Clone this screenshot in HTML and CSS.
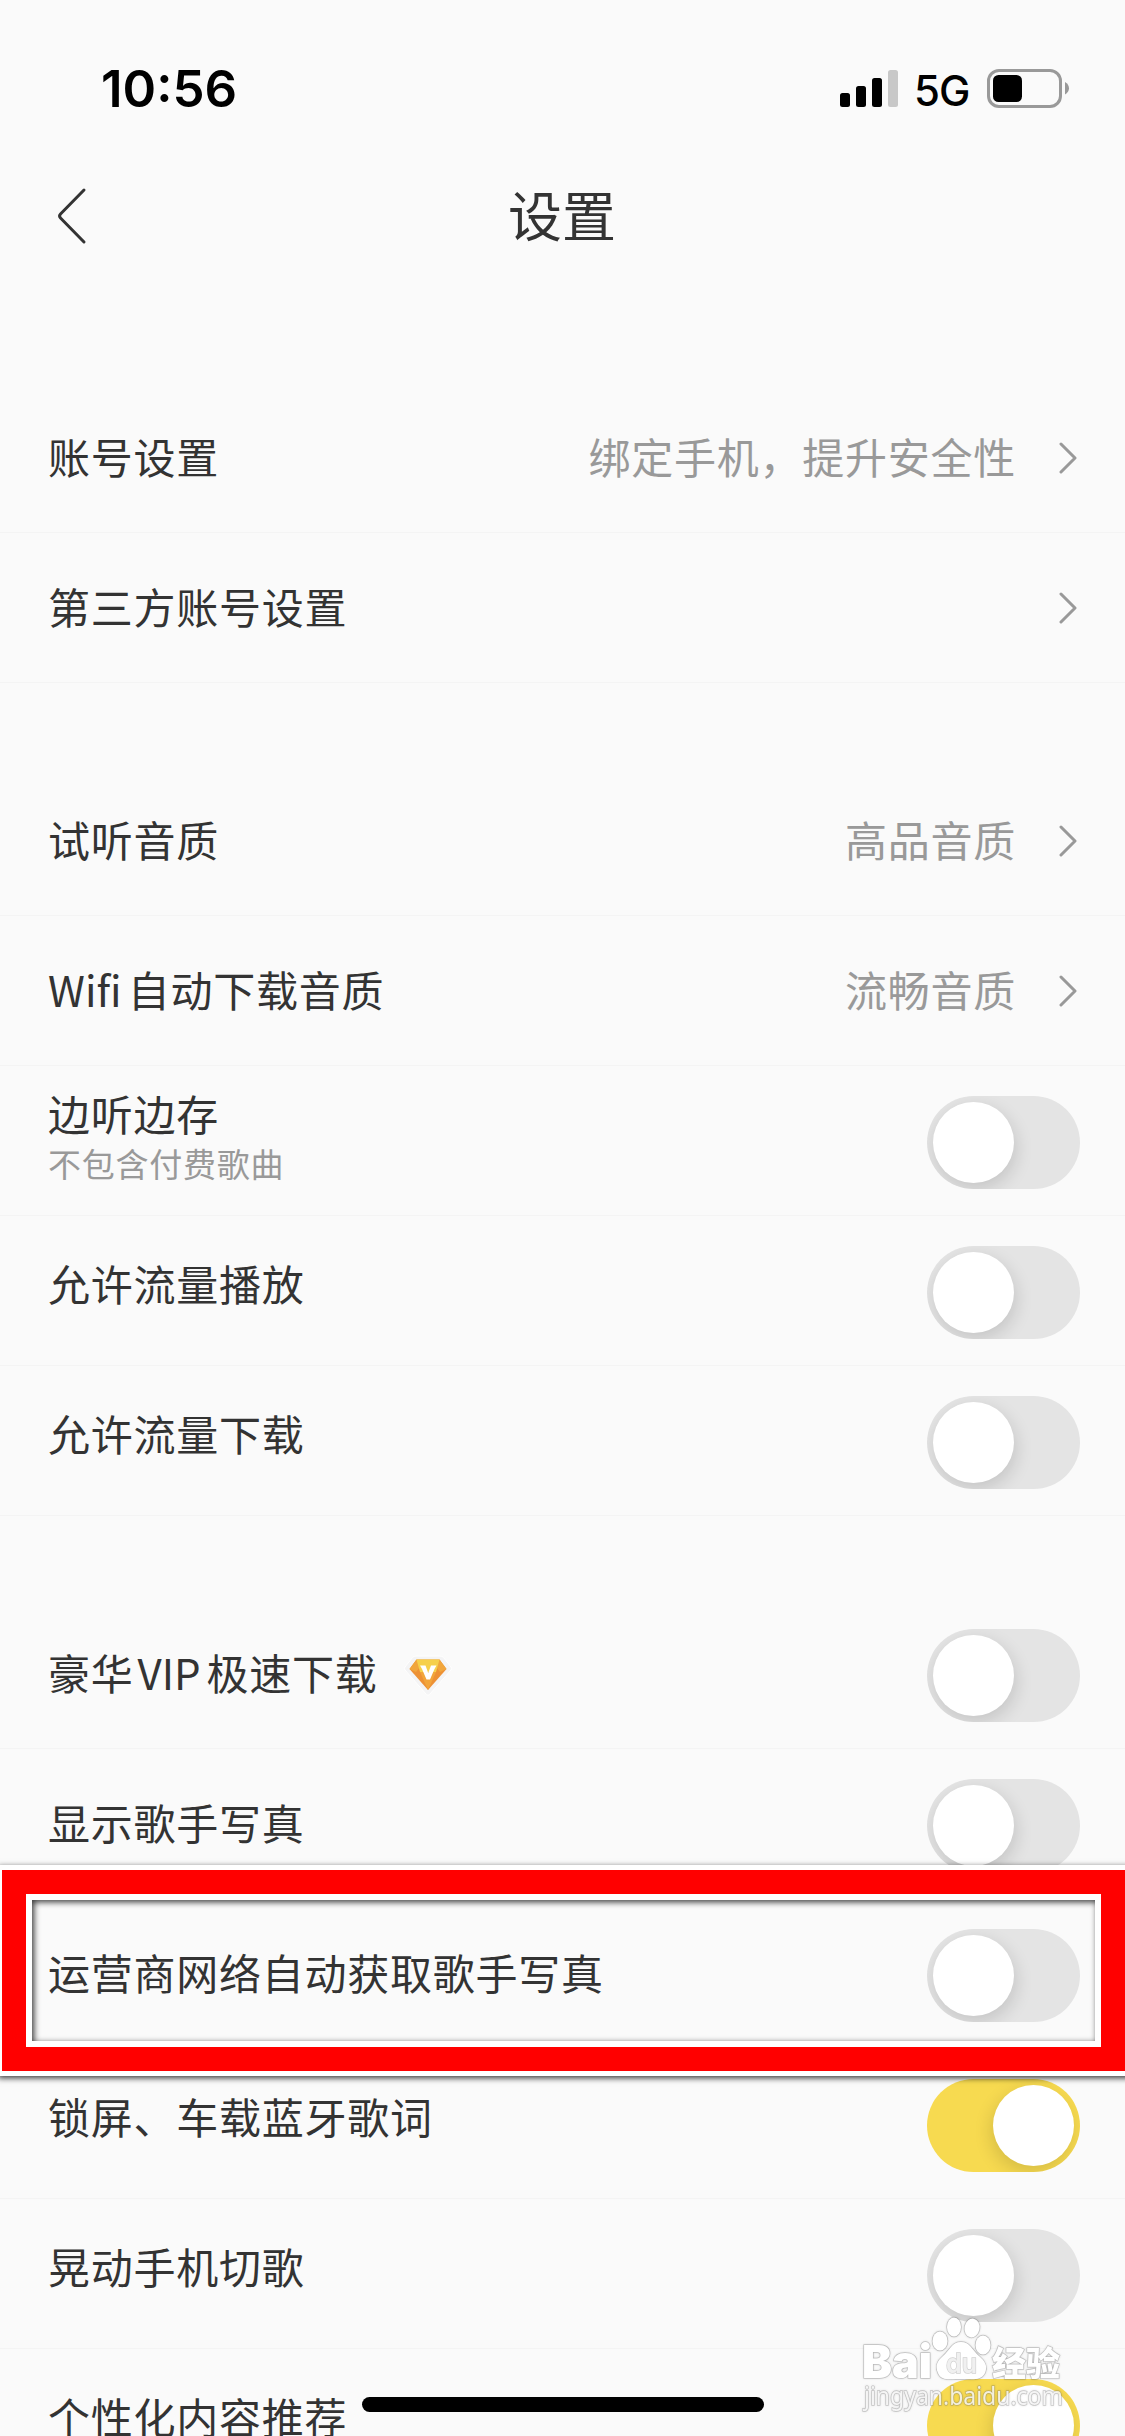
FILE: index.html
```
<!DOCTYPE html>
<html lang="zh-CN">

<head>
  <meta charset="utf-8">
  <title>设置</title>
  <link rel="stylesheet" href="styles.css">
</head>

<body>
  <!-- Status bar -->
  <div class="status-bar">
    <span class="time">10:56</span>
    <div class="status-icons">
      <svg class="signal" width="58" height="38" viewBox="0 0 58 38">
        <rect x="0" y="23" width="10" height="14" rx="2.5" />
        <rect x="16" y="16" width="10" height="21" rx="2.5" />
        <rect x="32" y="8" width="10" height="29" rx="2.5" />
        <rect x="48" y="0" width="10" height="37" rx="2.5" fill="#c8c8c8" />
      </svg>
      <span class="network">5G</span>
      <svg class="battery" width="83" height="39" viewBox="0 0 83 39">
        <rect x="1.5" y="1.5" width="72" height="36" rx="10.5" fill="none" stroke="#999" stroke-width="3" />
        <rect x="6" y="6" width="29" height="27" rx="5.5" />
        <path d="M78 13c5.300 2.500 5.300 10 0 12.500z" fill="#999" />
      </svg>
    </div>
  </div>

  <div class="nav">
    <svg class="back" width="30" height="58" viewBox="0 0 30 58">
      <path d="M27 3 3.500 27Q1.500 29 3.500 31L27 55" fill="none" stroke="#333" stroke-width="3" stroke-linecap="round" />
    </svg>
    <h1 class="nav-title">设置</h1>
  </div>

  <div class="settings">
    <ul class="group">
      <li class="row">
        <span class="label">账号设置</span>
        <span class="value">绑定手机，提升安全性</span>
        <svg class="arrow" width="18" height="32" viewBox="0 0 18 32"><path d="M2 2 16 16 2 30" /></svg>
      </li>
      <li class="row">
        <span class="label">第三方账号设置</span>
        <svg class="arrow" width="18" height="32" viewBox="0 0 18 32"><path d="M2 2 16 16 2 30" /></svg>
      </li>
    </ul>

    <ul class="group">
      <li class="row">
        <span class="label">试听音质</span>
        <span class="value">高品音质</span>
        <svg class="arrow" width="18" height="32" viewBox="0 0 18 32"><path d="M2 2 16 16 2 30" /></svg>
      </li>
      <li class="row">
        <span class="label"><span class="latin wifi">Wifi</span>自动下载音质</span>
        <span class="value">流畅音质</span>
        <svg class="arrow" width="18" height="32" viewBox="0 0 18 32"><path d="M2 2 16 16 2 30" /></svg>
      </li>
      <li class="row">
        <div class="label double">
          <div class="label-title">边听边存</div>
          <div class="label-sub">不包含付费歌曲</div>
        </div>
        <div class="switch"><div class="knob"></div></div>
      </li>
      <li class="row raised">
        <span class="label">允许流量播放</span>
        <div class="switch"><div class="knob"></div></div>
      </li>
      <li class="row raised">
        <span class="label">允许流量下载</span>
        <div class="switch"><div class="knob"></div></div>
      </li>
    </ul>

    <ul class="group">
      <li class="row">
        <span class="label label-vip">豪华<span class="latin vip">VIP</span>极速下载</span>
        <svg class="vip-icon" width="50" height="42" viewBox="0 0 50 42">
          <path d="M13 1H37Q39 1 40.500 2.500L48 12Q49 13.500 48 15L26.500 39.500Q25 41 23.500 39.500L2 15Q1 13.500 2 12L9.500 2.500Q11 1 13 1z" fill="#f4f4f5" stroke="#fff" />
          <path d="M13.500 4.500H36.500L43.500 14 25 35 6.500 14z" fill="#ed9135" />
          <path d="M13.500 4.500 6.500 14 13 17 17 12zM36.500 4.500 43.500 14 37 17 33 12z" fill="#f1a63c" />
          <path d="M13.500 4.500H36.500L33 17H17z" fill="#f6d04b" />
          <path d="M17 17H33L25 35z" fill="#f2a53b" />
          <path d="M17 10.500H22.500L25.200 18 28 10.500H33.500L31.500 14 27 24.500H23.500L19 14z" fill="#fff" />
        </svg>
        <div class="switch"><div class="knob"></div></div>
      </li>
      <li class="row">
        <span class="label">显示歌手写真</span>
        <div class="switch"><div class="knob"></div></div>
      </li>
      <li class="row marked">
        <span class="label">运营商网络自动获取歌手写真</span>
        <div class="switch"><div class="knob"></div></div>
        <div class="frame"><div class="frame-red"><div class="frame-inner"></div></div></div>
      </li>
      <li class="row raised">
        <span class="label">锁屏、车载蓝牙歌词</span>
        <div class="switch on"><div class="knob"></div></div>
      </li>
      <li class="row raised">
        <span class="label">晃动手机切歌</span>
        <div class="switch"><div class="knob"></div></div>
      </li>
      <li class="row raised">
        <span class="label">个性化内容推荐</span>
        <div class="switch on"><div class="knob"></div></div>
      </li>
    </ul>
  </div>

  <div class="home-indicator"></div>

  <!-- Watermark -->
  <svg class="watermark" width="216" height="108" viewBox="0 0 216 108">
    <g class="mark">
      <text x="5" y="70" font-size="45" font-weight="900" textLength="70" lengthAdjust="spacingAndGlyphs">Bai</text>
      <ellipse cx="83" cy="33" rx="7.500" ry="9.500" />
      <ellipse cx="97" cy="19" rx="7" ry="9.500" />
      <ellipse cx="115" cy="20" rx="7.500" ry="9.500" transform="rotate(10 115 20)" />
      <ellipse cx="126" cy="37" rx="7.500" ry="9.500" />
      <path d="M104 34C95 34 93 42 86 48C80 53 78 58 81 65C84 73 92 71 104 71C116 71 124 73 128 65C131 58 128 53 122 48C115 42 113 34 104 34z" />
      <text class="mark-du" x="89" y="65" font-size="27" font-weight="600" textLength="31" lengthAdjust="spacingAndGlyphs">du</text>
      <text class="mark-cn" x="135" y="68" font-size="34" font-weight="900" textLength="68" lengthAdjust="spacingAndGlyphs">经验</text>
    </g>
    <text class="mark mark-url" x="7" y="97" font-size="25" textLength="199" lengthAdjust="spacingAndGlyphs">jingyan.baidu.com</text>
  </svg>
</body>

</html>
```
FILE: styles.css
```
* {
  box-sizing: border-box;
}

body {
  position: relative;
  width: 1125px;
  height: 2436px;
  margin: 0;
  overflow: hidden;
  background-color: #fafafa;
  color: #333;
  font-family: "Noto Sans CJK SC", sans-serif;
}

/* Status bar */
.status-bar {
  display: flex;
  justify-content: space-between;
  height: 132px;
  padding: 69px 55px 0 101px;
  color: #000;
  font-family: Inter, sans-serif;
}

.time {
  font-size: 51px;
  font-weight: 600;
  line-height: 40px;
}

.status-icons {
  display: flex;
  align-items: flex-start;
}

.signal {
  margin-top: 1px;
}

.network {
  width: 89px;
  padding-left: 16px;
  font-size: 42px;
  font-weight: 500;
  line-height: 43px;
  letter-spacing: -1px;
}

/* Title bar */
.nav {
  position: relative;
  display: flex;
  align-items: center;
  justify-content: center;
  height: 168px;
}

.back {
  position: absolute;
  left: 57px;
  top: 55px;
}

.nav-title {
  margin: 0 1px 5px 0;
  font-size: 54px;
  font-weight: 400;
  line-height: 60px;
}

/* Settings list */
.group {
  margin: 0;
  padding: 83px 0 0;
  list-style-type: none;
}

.row {
  position: relative;
  display: flex;
  align-items: center;
  height: 150px;
  padding: 0 48px 0 48px;
  border-bottom: 1px solid #f4f4f4;
}

.label {
  margin-right: auto;
  margin-bottom: 3px;
  font-size: 42px;
  line-height: 60px;
  letter-spacing: 0.75px;
}

.raised .label {
  margin-bottom: 15px;
}

.double {
  margin-bottom: 13px;
}

.label-sub {
  margin-top: -2px;
  color: #999;
  font-size: 33px;
  line-height: 44px;
}

.latin {
  font-variant-ligatures: none;
  letter-spacing: 0;
}

.wifi {
  margin-right: 6px;
}

.vip {
  margin: 0 6px 0 4px;
}

.value {
  margin: 0 43px 3px 0;
  color: #999;
  font-size: 42px;
  line-height: 60px;
  letter-spacing: 0.75px;
}

.arrow {
  fill: none;
  stroke: #999;
  stroke-width: 3;
  stroke-linecap: round;
  stroke-linejoin: round;
}

.label-vip {
  margin-right: 25px;
}

.vip-icon {
  margin: 4px auto 0 0;
}

/* Toggle switch */
.switch {
  display: flex;
  width: 153px;
  height: 93px;
  margin: 3px -3px 0 0;
  padding: 6px;
  overflow: hidden;
  border-radius: 47px;
  background-color: #e4e4e4;
}

.switch.on {
  justify-content: flex-end;
  background-color: #f7da50;
}

.knob {
  width: 81px;
  height: 81px;
  border-radius: 50%;
  background-color: #fff;
  box-shadow: 2px 6px 18px rgba(0, 0, 0, 0.14);
}

.on .knob {
  box-shadow: -2px 6px 18px rgba(0, 0, 0, 0.14);
}

/* Red frame over the marked row */
.marked {
  z-index: 1;
}

.frame {
  position: absolute;
  left: -3px;
  top: -34px;
  width: 1133px;
  height: 211px;
  border: 5.500px solid #fff;
  box-shadow: 1px 2px 6px rgba(0, 0, 0, 0.8);
}

.frame-red {
  height: 100%;
  border: 24px solid #f00;
}

.frame-inner {
  height: 100%;
  border: 6px solid #fff;
  box-shadow: inset 2px 2px 6px rgba(0, 0, 0, 0.8);
}

.home-indicator {
  position: absolute;
  left: 362px;
  bottom: 24px;
  width: 402px;
  height: 15px;
  border-radius: 8px;
  background-color: #000;
  z-index: 2;
}

/* Watermark */
.watermark {
  position: absolute;
  right: 52px;
  bottom: 20px;
  z-index: 2;
}

.mark {
  fill: #fff;
  stroke: rgba(120, 120, 120, 0.35);
  stroke-width: 1.500px;
  paint-order: stroke;
  font-family: Inter, sans-serif;
  filter: drop-shadow(0 0 1px rgba(0, 0, 0, 0.2));
}

.mark-du {
  fill: #f0f0f0;
}

.mark-cn {
  font-family: "Noto Sans CJK SC", sans-serif;
}

.mark-url {
  font-family: "Noto Sans", sans-serif;
  fill: rgba(255, 255, 255, 0.8);
}
```
